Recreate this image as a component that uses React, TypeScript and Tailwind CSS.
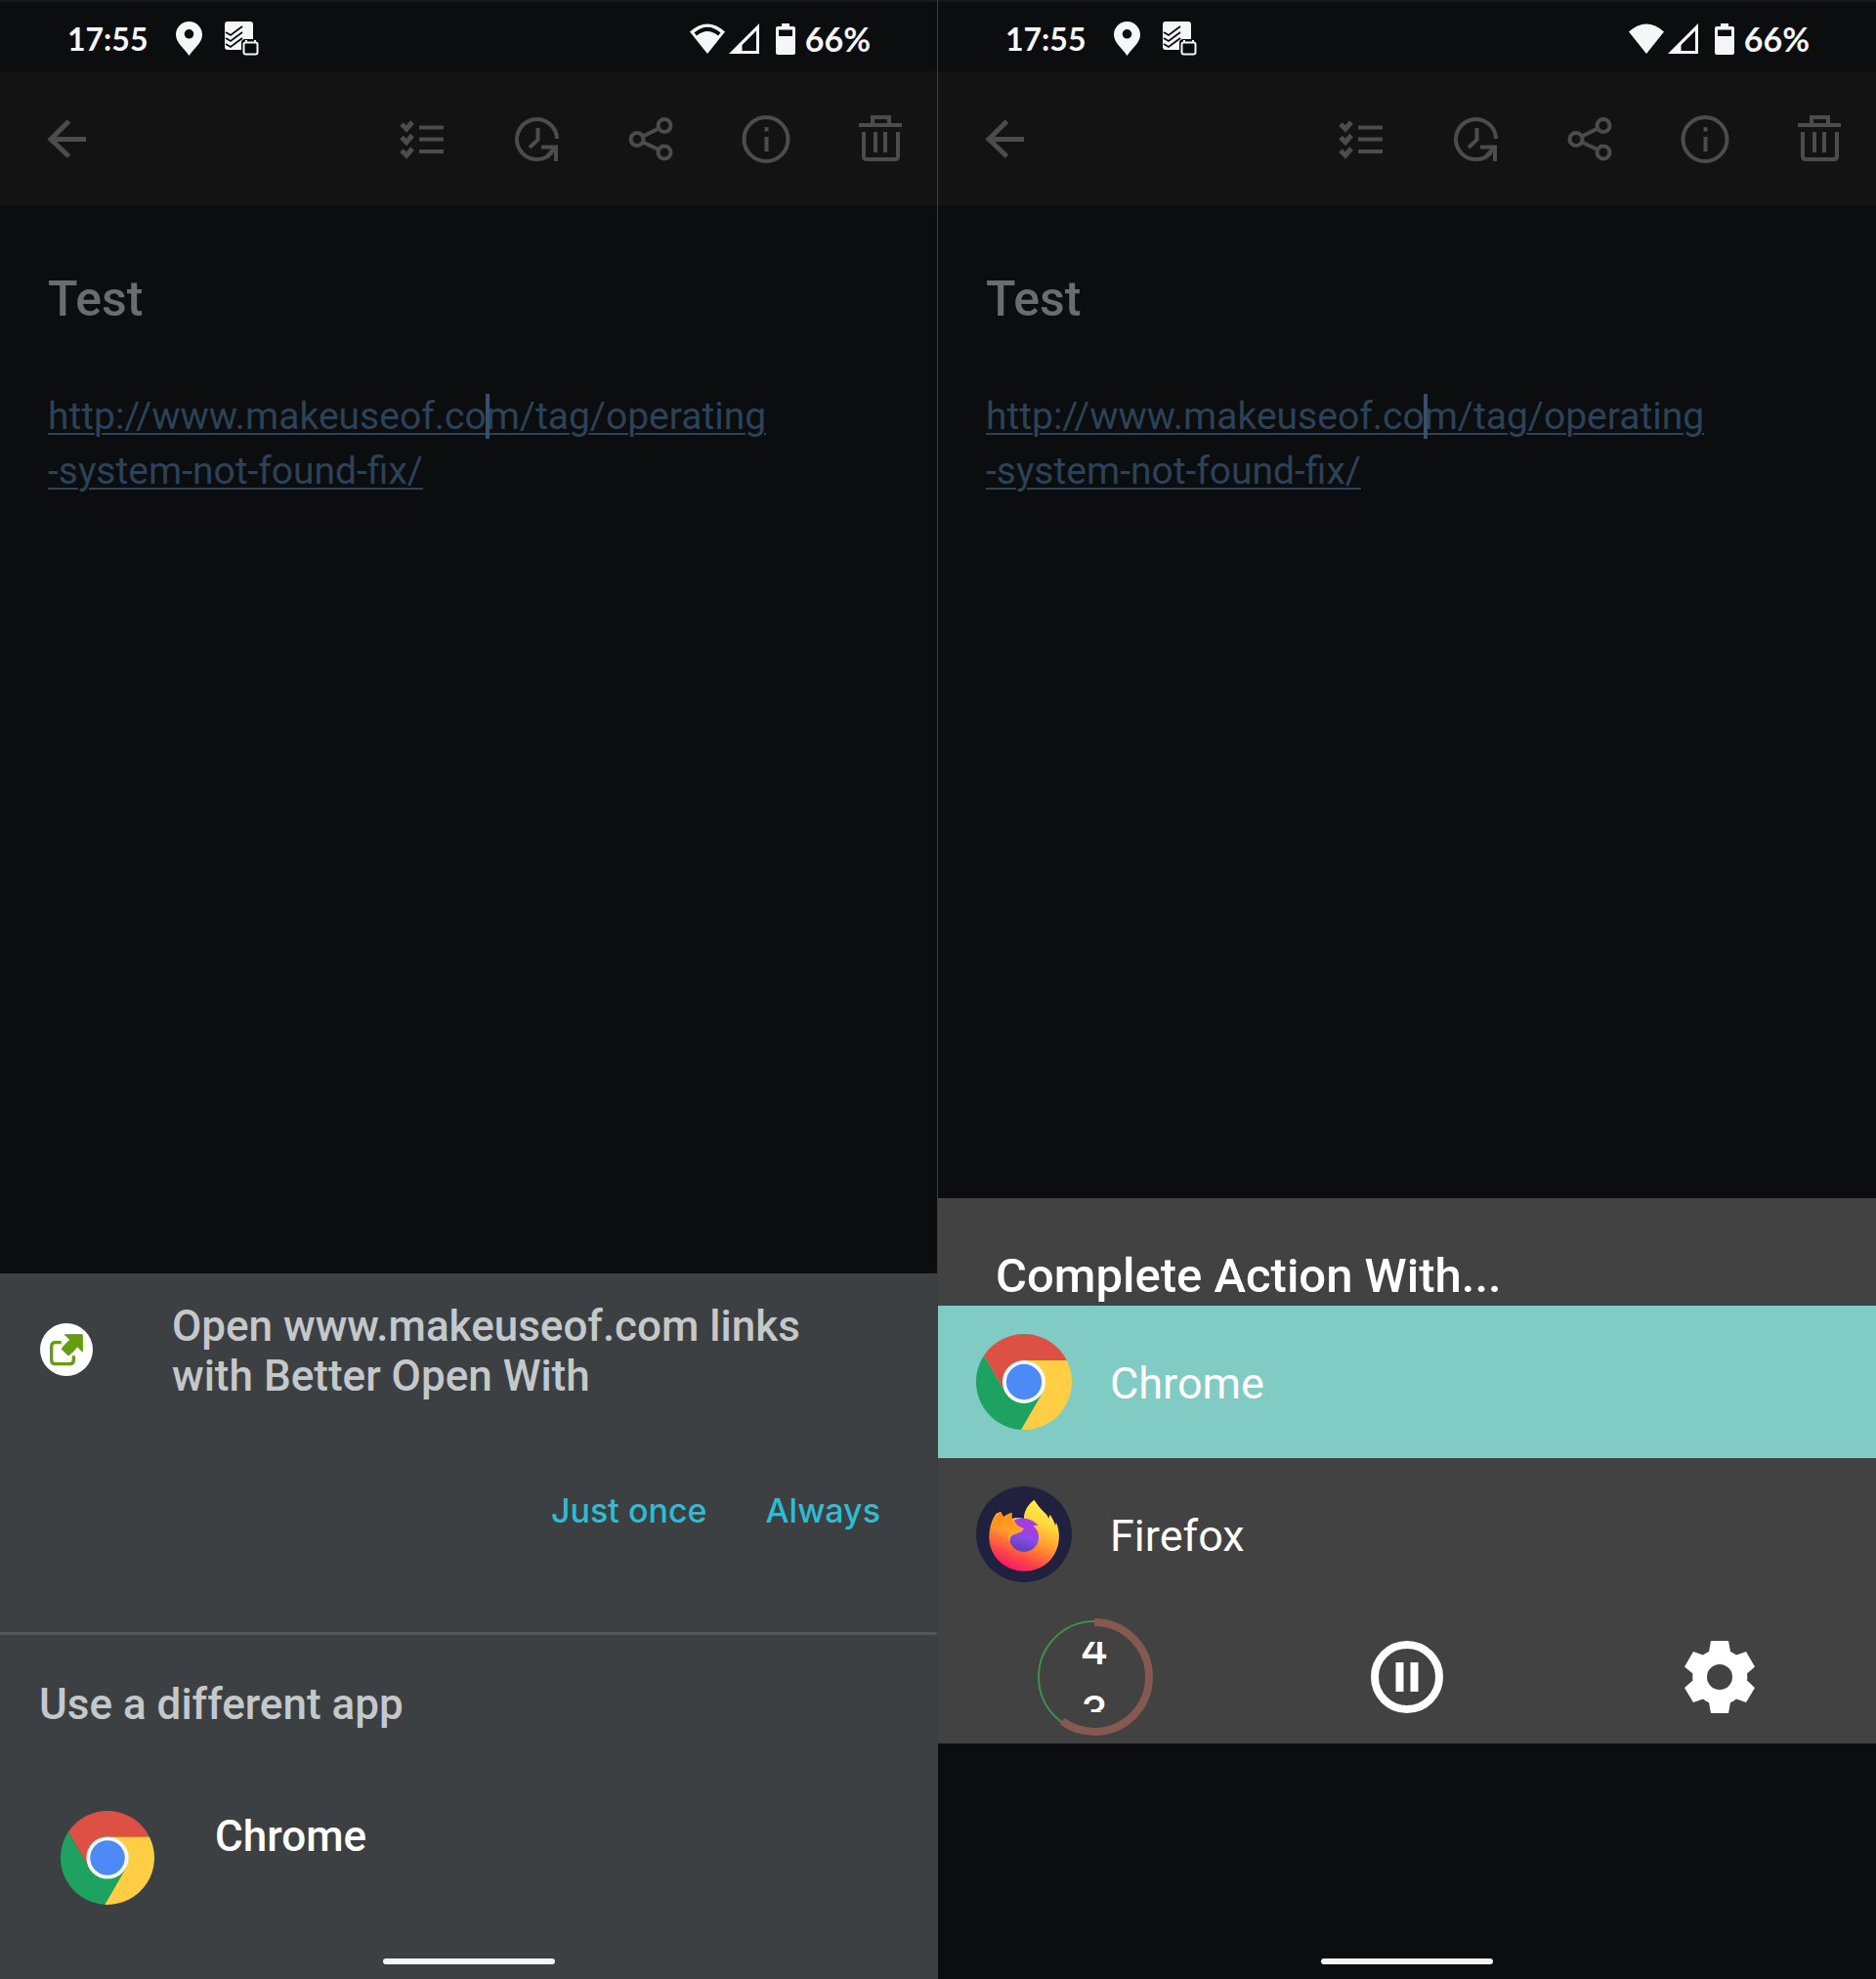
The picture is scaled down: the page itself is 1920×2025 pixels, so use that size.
import type { ReactNode } from 'react'

const iconStroke = { fill: 'none', stroke: 'currentColor', strokeWidth: 4 } as const

function ChromeLogo({ className }: { className: string }) {
  return (
    <svg viewBox="-50 -50 100 100" className={className} aria-hidden="true">
      <path d="M-41.8-27.5A50 50 0 0 1 44.65-22.5H0L-19.5 11.25Z" fill="#dd5144" />
      <path d="M-41.8-27.5A50 50 0 0 0-2.9 49.9L19.5 11.25L-19.5 11.25Z" fill="#1da261" />
      <path d="M44.65-22.5A50 50 0 0 1-2.9 49.9L19.5 11.25L0-22.5Z" fill="#ffce44" />
      <circle r="22.5" fill="#f6f7f8" />
      <circle r="18.5" fill="#4c8bf5" />
    </svg>
  )
}

function FirefoxLogo({ className }: { className: string }) {
  return (
    <svg viewBox="12 12 294 294" className={className} aria-hidden="true">
      <defs>
        <linearGradient id="ff-body" x1="0.75" y1="0" x2="0.35" y2="1">
          <stop offset="0" stopColor="#fff44f" />
          <stop offset="0.3" stopColor="#ffd43a" />
          <stop offset="0.55" stopColor="#ff9a2e" />
          <stop offset="0.8" stopColor="#ff4a45" />
          <stop offset="1" stopColor="#f5156c" />
        </linearGradient>
        <linearGradient id="ff-head" x1="0" y1="0" x2="1" y2="1">
          <stop offset="0" stopColor="#ff8a16" />
          <stop offset="1" stopColor="#ffae2b" />
        </linearGradient>
        <linearGradient id="ff-globe" x1="0.7" y1="0" x2="0.4" y2="1">
          <stop offset="0" stopColor="#a23bdc" />
          <stop offset="0.5" stopColor="#8d4be8" />
          <stop offset="1" stopColor="#5a3fb8" />
        </linearGradient>
      </defs>
      <circle cx="159" cy="159" r="147" fill="#20203f" />
      <path
        d="M190 53C200 68 210 80 222 92C228 97 232 103 235 110L239 98C247 110 252 121 255 132L258 122C265 140 268 156 266 176C261 231 218 272 160 272C101 272 52 227 52 168C52 140 60 115 73 96L87 89L96 106L122 93L121 112C134 106 147 108 159 112C158 89 170 68 190 53Z"
        fill="url(#ff-body)"
      />
      <circle cx="159" cy="168" r="45" fill="url(#ff-globe)" />
      <path d="M128 117C152 102 184 111 203 132C195 131 190 132 186 134C194 141 200 150 201 160L160 160Z" fill="#a040de" />
      <path
        d="M57 134C62 116 70 105 87 89L96 106C104 98 112 95 122 93C119 103 121 111 128 118C132 128 145 137 158 141C157 152 142 154 132 158C122 161 115 167 117 181C106 170 108 155 118 148C98 140 78 146 57 134Z"
        fill="url(#ff-head)"
      />
    </svg>
  )
}

function OpenWithLogo({ className }: { className: string }) {
  return (
    <svg viewBox="35 28 162 162" className={className} aria-hidden="true">
      <circle cx="116" cy="109" r="81" fill="#fff" />
      <path d="M100 87H82Q70 87 70 99V141Q70 153 82 153H126Q138 153 138 141V128" fill="none" stroke="#659c10" strokeWidth="10" />
      <path
        d="M111 63H165V115L149 99Q140 114 122 127L101 107Q112 91 127 79Z"
        fill="#659c10"
        stroke="#659c10"
        strokeWidth="3"
        strokeLinejoin="round"
      />
    </svg>
  )
}

function StatusBar({ wifiWeak = false }: { wifiWeak?: boolean }) {
  return (
    <div className="flex h-[73px] items-center justify-between border-t-2 border-[#17181a] pt-1 pr-[68px] pl-[69px] font-['Lato'] text-[32px] leading-10 font-bold text-[#f5f6f7]">
      <div className="flex items-center">
        <span className="w-[111px]">17:55</span>
        <svg viewBox="0 0 27 35" className="mr-[23px] h-[35px] w-[27px]" aria-hidden="true">
          <path
            fill="currentColor"
            fillRule="evenodd"
            d="M13.500 0C6 0 0 6 0 13.500C0 22 8.500 27 13.500 35C18.500 27 27 22 27 13.500C27 6 21 0 13.500 0ZM13.500 8A4.800 4.800 0 1 1 13.500 17.600A4.800 4.800 0 1 1 13.500 8Z"
          />
        </svg>
        <svg viewBox="0 0 36 36" className="size-9" aria-hidden="true">
          <rect width="29" height="29" rx="3" fill="currentColor" />
          <path d="M0 12L5 15L17 6M0 18L5 21L17 12M0 24L5 27L17 18" transform="translate(1 -1)" fill="none" stroke="#0b0c0e" strokeWidth="1.800" />
          <rect x="17" y="18" width="19" height="18" rx="4" fill="#0b0c0e" />
          <rect x="19.500" y="21.500" width="14" height="12" rx="2" fill="none" stroke="currentColor" strokeWidth="2" />
          <path d="M22 19V22M31 19V22" stroke="currentColor" strokeWidth="2" />
        </svg>
      </div>
      <div className="flex items-center">
        <svg viewBox="0 0 36 32" className="h-8 w-9" aria-hidden="true">
          <path d="M0 8.500Q18-7.500 36 8.500L18 31Z" fill="currentColor" />
          {wifiWeak && <path d="M4.500 9.500Q18-2 31.500 9.500L29 12.500Q18 3.500 7 12.500Z" fill="#0b0c0e" />}
        </svg>
        <svg viewBox="0 0 31 31" className="ml-1 size-[31px]" aria-hidden="true">
          <path fill="currentColor" fillRule="evenodd" d="M31 0V31H0ZM28 7.500L13.500 22V28H28Z" />
        </svg>
        <svg viewBox="0 0 20 32" className="mr-[10px] ml-[17px] h-8 w-5" aria-hidden="true">
          <path fill="currentColor" fillRule="evenodd" d="M6 0H14V3H18Q20 3 20 5V30Q20 32 18 32H2Q0 32 0 30V5Q0 3 2 3H6ZM3 6.500V13H17V6.500Z" />
        </svg>
        <span className="text-[34px]">66%</span>
      </div>
    </div>
  )
}

function ToolButton({ label, children }: { label: string; children: ReactNode }) {
  return (
    <button type="button" aria-label={label} className="flex h-[137px] w-[117px] items-center justify-center">
      <svg viewBox="0 0 56 56" className="size-14" {...iconStroke}>
        {children}
      </svg>
    </button>
  )
}

function Toolbar() {
  return (
    <div className="flex h-[137px] items-center justify-between bg-[#131313] text-[#4c4c4c]">
      <button type="button" aria-label="Back" className="flex h-[137px] w-[137px] items-center justify-center">
        <svg viewBox="0 0 56 56" className="size-14" {...iconStroke} strokeWidth={5}>
          <path d="M47 28.500H11M29.500 10L11 28.500L29.500 46" />
        </svg>
      </button>
      <div className="flex">
        <ToolButton label="Checklist">
          <path d="M6 13L11 18L17 11M6 26.500L11 31.500L17 24.500M6 40L11 45L17 38" strokeWidth="5" />
          <path d="M24 16.500H49M24 28.500H49M24 41H49" />
        </ToolButton>
        <ToolButton label="Reminder">
          <path d="M48 28A20.500 20.500 0 1 0 43 42M28.500 17V29L20 37" />
          <path d="M32 36.500H47V51M47 36.500L38 46" />
        </ToolButton>
        <ToolButton label="Share">
          <circle cx="13" cy="28.500" r="6.500" />
          <circle cx="41" cy="14.500" r="6.500" />
          <circle cx="41" cy="42" r="6.500" />
          <path d="M19 25.500L35 17.500M19 31.500L35 39" />
        </ToolButton>
        <ToolButton label="Info">
          <circle cx="28" cy="28.500" r="22.500" />
          <path d="M28.500 26V41M28.500 16V20.500" />
        </ToolButton>
        <ToolButton label="Delete">
          <path d="M6 14H50M20 13V6H37V13M11 21V46Q11 49 14 49H43Q46 49 46 46V21" />
          <path d="M23 21V42M33 21V42" />
        </ToolButton>
      </div>
    </div>
  )
}

function Note() {
  return (
    <div className="flex-1 pt-[64px] pl-[49px]">
      <h1 className="text-[50px] leading-[64px] font-medium text-[#6c6c6e]">Test</h1>
      <p className="mt-[60px] text-[39px] leading-[56px]">
        <a href="#link" className="text-[#2c4257] underline decoration-2 underline-offset-4">
          http://www.makeuseof.co
          <span className="relative">
            <span className="absolute top-0 -left-px h-[46px] w-1 bg-[#34506e]" />
          </span>
          m/tag/operating
          <br />
          -system-not-found-fix/
        </a>
      </p>
    </div>
  )
}

function HomeHandle() {
  return <div className="mx-auto h-[6px] w-[176px] rounded-full bg-[#f4f5f6]" />
}

function OpenLinksSheet() {
  return (
    <section className="bg-[#3d4043] pb-[15px] text-[#c4c8cb]">
      <div className="flex pt-[29px] pl-[41px]">
        <OpenWithLogo className="mt-[22px] size-[54px]" />
        <h2 className="ml-[81px] text-[44px] leading-[51px] font-medium">
          Open www.makeuseof.com links
          <br />
          with Better Open With
        </h2>
      </div>
      <div className="mt-[85px] flex justify-end gap-[60px] pr-[58px] font-['Inter'] text-[34px] leading-[54px] font-medium text-[#2cbdd4]">
        <button type="button">Just once</button>
        <button type="button">Always</button>
      </div>
      <div className="mt-[97px] border-t-3 border-[#55585b] pt-[45px]">
        <h3 className="pl-[40px] text-[44px] leading-[52px] font-medium">Use a different app</h3>
        <button type="button" className="mt-[83px] flex w-full pl-[62px] text-left">
          <ChromeLogo className="size-[96px]" />
          <span className="ml-[62px] text-[44px] leading-[52px] font-medium text-white">Chrome</span>
        </button>
      </div>
      <div className="pt-[55px]">
        <HomeHandle />
      </div>
    </section>
  )
}

function Countdown() {
  // share of the time already gone
  const elapsed = 60
  return (
    <div className="relative flex size-[120px] items-center justify-center">
      <svg viewBox="0 0 120 120" className="absolute inset-0 -rotate-90" fill="none" aria-hidden="true">
        <circle cx="60" cy="60" r="57" stroke="#3f8f4c" strokeWidth="2" />
        <circle cx="60" cy="60" r="56" pathLength="100" strokeDasharray={`${elapsed} 100`} stroke="#85594f" strokeWidth="8" />
      </svg>
      <div className="flex h-[72px] flex-col overflow-hidden text-center font-['Inter'] text-[44px] leading-[64px] font-medium">
        <span className="-mt-[25px]">4</span>
        <span>3</span>
      </div>
    </div>
  )
}

function CompleteActionSheet() {
  return (
    <section className="bg-[#424242] text-white">
      <h2 className="pt-[52px] pb-[2px] pl-[59px] text-[49px] leading-[56px] font-medium">Complete Action With...</h2>
      <button type="button" className="flex h-[156px] w-full items-center bg-[#80cbc4] pl-[39px] text-left">
        <ChromeLogo className="size-[98px]" />
        <span className="ml-[39px] pt-1 text-[45px] leading-[52px]">Chrome</span>
      </button>
      <button type="button" className="flex h-[156px] w-full items-center pl-[39px] text-left">
        <FirefoxLogo className="size-[98px]" />
        <span className="ml-[39px] pt-1 text-[45px] leading-[52px]">Firefox</span>
      </button>
      <div className="grid h-[136px] grid-cols-3 place-items-center">
        <Countdown />
        <button type="button" aria-label="Pause">
          <svg viewBox="0 0 74 74" className="size-[74px]" {...iconStroke} strokeWidth={8}>
            <circle cx="37" cy="37" r="33" />
            <path d="M29.500 22V52M44.500 22V52" />
          </svg>
        </button>
        <button type="button" aria-label="Settings">
          <svg viewBox="0 0 74 74" className="size-[74px]" aria-hidden="true">
            <path
              fill="currentColor"
              fillRule="evenodd"
              d="M28 0H46L48 11Q51 12 54 14.500L64 11L73 26.500L65 33.500Q65.500 37 65 40.500L73 48L64 63L54 59.500Q51 62 48 63L46 74H28L26 63Q23 62 20 59.500L10 63L1 48L9.500 40.500Q9 37 9.500 33.500L1 26.500L10 11L20 14.500Q23 12 26 11ZM37 24A13 13 0 1 0 37 50A13 13 0 1 0 37 24Z"
            />
          </svg>
        </button>
      </div>
    </section>
  )
}

export default function App() {
  return (
    <main className="grid min-h-screen grid-cols-2 bg-[#0b0d0f] font-['Roboto',sans-serif]">
      <div className="flex flex-col border-r border-[#3a3c3e]">
        <StatusBar wifiWeak />
        <Toolbar />
        <Note />
        <OpenLinksSheet />
      </div>
      <div className="flex flex-col">
        <StatusBar />
        <Toolbar />
        <Note />
        <CompleteActionSheet />
        <div className="pt-[220px] pb-[15px]">
          <HomeHandle />
        </div>
      </div>
    </main>
  )
}
